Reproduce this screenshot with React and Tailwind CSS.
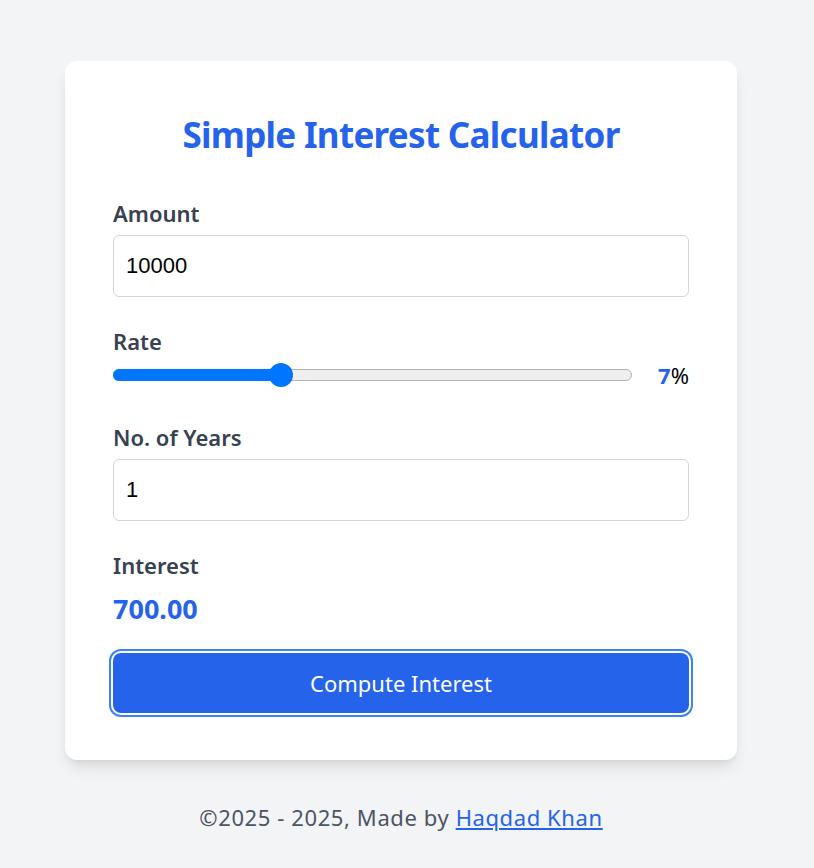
import { useState } from "react";

const font = { fontFamily: '"Noto Sans", "Open Sans", sans-serif' };

function RateSlider({ value, min, max }) {
  const pct = (value - min) / (max - min);
  // thumb is 24px wide, its centre moves from 12px to (width - 12px)
  const left = `calc(12px + (100% - 24px) * ${pct})`;
  return (
    <div className="relative flex-1 h-[26px] flex items-center">
      <div className="w-full h-[12px] rounded-full bg-[#efefef] border border-[#b2b2b2]" />
      <div className="absolute left-0 top-[7px] h-[12px] rounded-l-full bg-[#0075ff]" style={{ width: left }} />
      <div
        className="absolute top-[1px] w-[24px] h-[24px] rounded-full bg-[#0075ff] -translate-x-1/2"
        style={{ left }}
      />
    </div>
  );
}

export default function App() {
  const [amount] = useState("10000");
  const [rate] = useState(7);
  const [years] = useState("1");
  const interest = ((Number(amount) * rate * Number(years)) / 100).toFixed(2);

  return (
    <div className="min-h-screen bg-[#f3f4f6] pt-[61px] pr-[12px] flex flex-col items-center" style={font}>
      <div className="w-[672px] bg-white rounded-xl shadow-lg px-[48px] pt-[52px] pb-[47px]">
        <h1 className="text-[35px] leading-[44px] tracking-[-0.7px] font-bold text-[#2563eb] text-center">
          Simple Interest Calculator
        </h1>

        <label className="block mt-[41px] text-[22px] leading-[30px] font-semibold text-[#374151]">Amount</label>
        <input
          value={amount}
          readOnly
          className="mt-[7px] w-full h-[62px] px-3 border border-[#d1d5db] rounded-md text-[22px] text-black outline-none"
          style={{ fontFamily: '"Liberation Sans", Arial, sans-serif' }}
        />

        <label className="block mt-[29px] text-[22px] leading-[30px] font-semibold text-[#374151]">Rate</label>
        <div className="mt-[4px] flex items-center gap-[26px] h-[30px]">
          <RateSlider value={rate} min={1} max={20} />
          <span className="text-[22px] leading-[30px] text-black">
            <span className="font-bold text-[#2563eb]">{rate}</span>%
          </span>
        </div>

        <label className="block mt-[32px] text-[22px] leading-[30px] font-semibold text-[#374151]">No. of Years</label>
        <input
          value={years}
          readOnly
          className="mt-[7px] w-full h-[62px] px-3 border border-[#d1d5db] rounded-md text-[22px] text-black outline-none"
          style={{ fontFamily: '"Liberation Sans", Arial, sans-serif' }}
        />

        <div className="mt-[29px] text-[22px] leading-[30px] font-semibold text-[#374151]">Interest</div>
        <div className="mt-[12px] text-[27px] leading-[34px] font-bold text-[#2563eb]">{interest}</div>

        <button className="mt-[27px] w-full h-[60px] rounded-lg bg-[#2563eb] text-white text-[22px] ring-2 ring-[#3b82f6] ring-offset-2">
          Compute Interest
        </button>
      </div>

      <p className="mt-[42px] text-[22px] leading-[30px] tracking-[0.6px] text-[#4b5563]">
        ©2025 - 2025, Made by{" "}
        <a href="#" className="text-[#2563eb] underline">
          Haqdad Khan
        </a>
      </p>
    </div>
  );
}
